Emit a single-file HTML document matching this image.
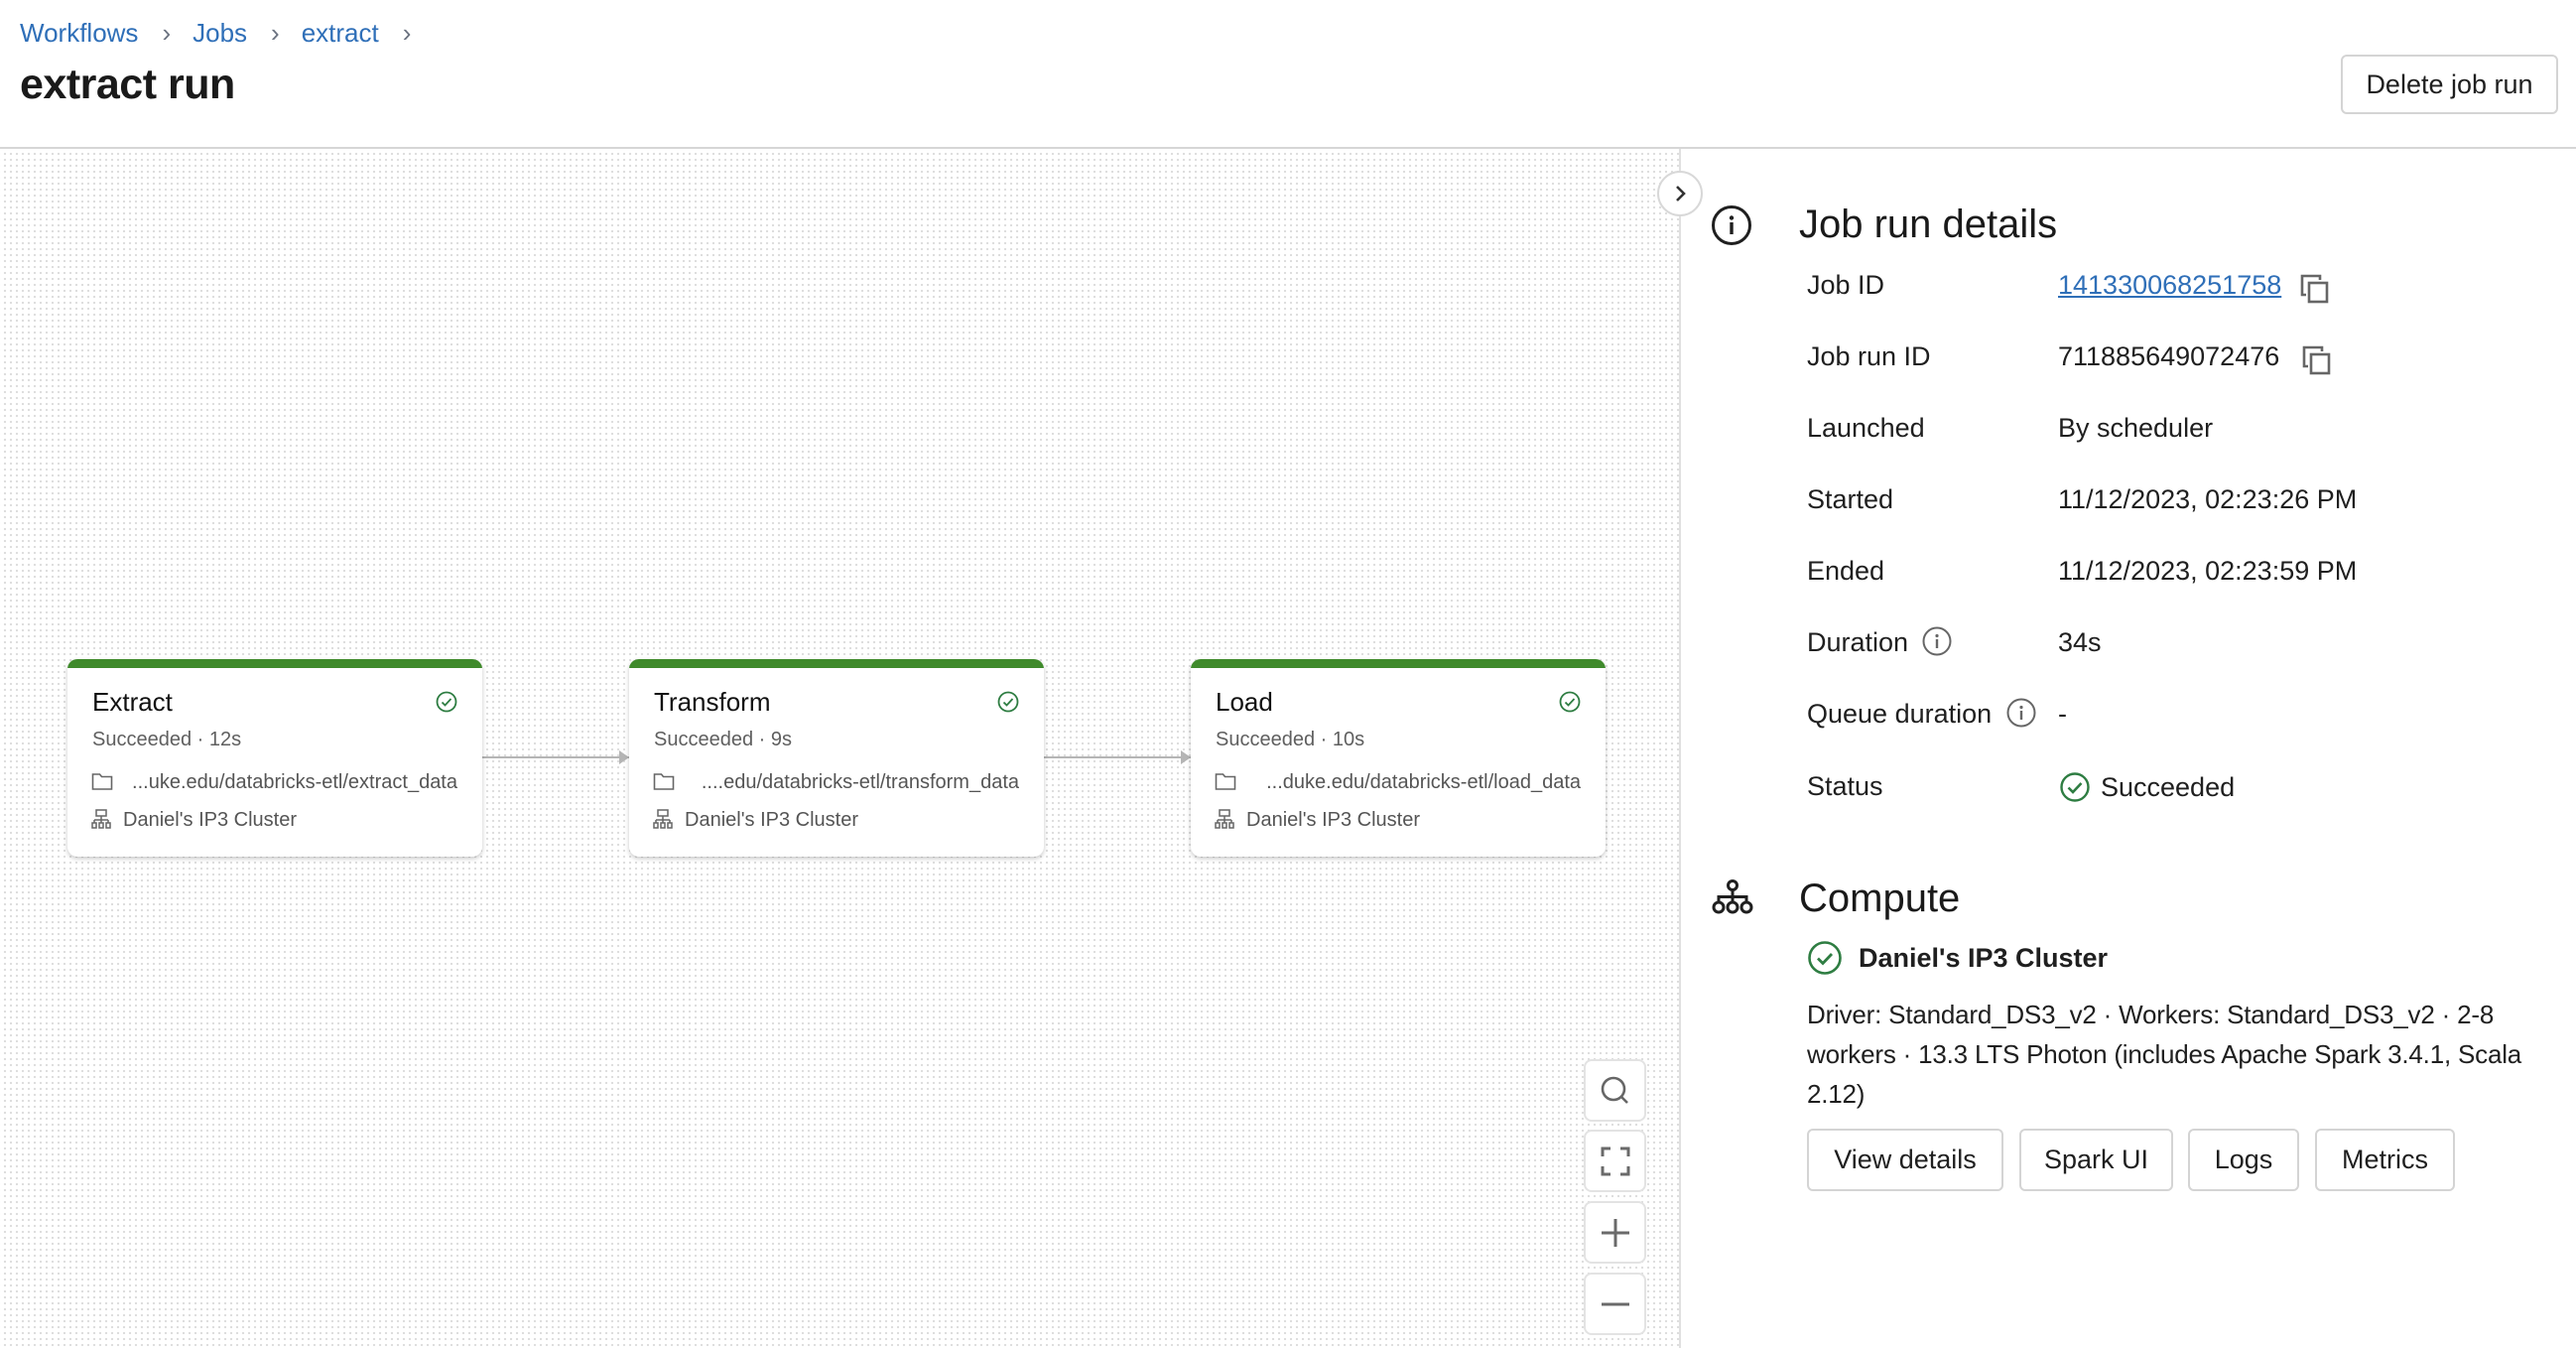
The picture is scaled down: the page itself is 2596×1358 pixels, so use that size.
<!DOCTYPE html>
<html><head><meta charset="utf-8">
<style>
*{box-sizing:border-box;margin:0;padding:0}
body{width:2596px;height:1358px;overflow:hidden;background:#fff;font-family:"Liberation Sans",Arial,sans-serif;color:#1f1f1f;position:relative}
.abs{position:absolute}
.bc{left:20px;top:18px;font-size:26px;color:#2f6fb8}
.bc span.sep{color:#6b7280;margin:0 22px 0 24px;font-size:26px}
.title{left:20px;top:61px;font-size:43px;font-weight:bold;color:#1a1a1a;letter-spacing:-0.5px}
.btn{position:absolute;border:2px solid #d4d4d4;border-radius:6px;background:#fff;font-size:27px;color:#1f1f1f;display:flex;align-items:center;justify-content:center}
.canvas{left:0;top:150px;width:1692px;height:1208px;background-color:#fff;background-image:radial-gradient(circle,#dcdcdc 1px,transparent 1.3px);background-size:6px 6px;background-position:2px 2px}
.hline{left:0;top:148px;width:2596px;height:2px;background:#d6d6d6}
.vline{left:1692px;top:150px;width:2px;height:1208px;background:#e0e0e0}
.card{position:absolute;top:664px;width:418px;height:199px;background:#fff;border-radius:10px;box-shadow:0 2px 5px rgba(0,0,0,.22);overflow:hidden}
.card .bar{position:absolute;left:0;top:0;right:0;height:9px;background:#3f8a2b}
.card .t{position:absolute;left:25px;top:28px;font-size:26px;color:#111}
.card .s{position:absolute;left:25px;top:70px;font-size:20px;color:#5f5f5f}
.card .p{position:absolute;right:25px;top:113px;font-size:20px;color:#555;white-space:nowrap}
.card .c{position:absolute;left:56px;top:151px;font-size:20px;color:#555}
.card .fi{position:absolute;left:24px;top:113px}
.card .ci{position:absolute;left:24px;top:151px}
.card .ok{position:absolute;right:25px;top:32px}
.edge{position:absolute;top:762px;height:2px;background:#b5b5b5}
.lbl{position:absolute;left:1821px;font-size:27px;color:#1f1f1f}
.val{position:absolute;left:2074px;font-size:27px;color:#1f1f1f}
.ctl{position:absolute;left:1596px;width:63px;height:63px;border:2px solid #e3e3e3;border-radius:8px;background:#fff;display:flex;align-items:center;justify-content:center}
</style></head><body>
<div class="abs bc">Workflows<span class="sep">›</span>Jobs<span class="sep">›</span>extract<span class="sep">›</span></div>
<div class="abs title">extract run</div>
<div class="btn" style="left:2359px;top:55px;width:219px;height:60px">Delete job run</div>
<div class="abs canvas"></div>
<div class="abs hline"></div>
<div class="abs vline"></div>

<div class="edge" style="left:486px;width:148px"></div>
<div class="edge" style="left:1052px;width:148px"></div>
<svg class="abs" style="left:624px;top:756px" width="12" height="14"><path d="M0 0 L10 7 L0 14Z" fill="#b5b5b5"/></svg>
<svg class="abs" style="left:1190px;top:756px" width="12" height="14"><path d="M0 0 L10 7 L0 14Z" fill="#b5b5b5"/></svg>

<div class="card" style="left:68px"><div class="bar"></div><div class="t">Extract</div><div class="s">Succeeded · 12s</div>
<svg class="fi" width="22" height="20" viewBox="0 0 22 20"><path d="M1.5 3h7l2 2.5h10v12.5h-19z" fill="none" stroke="#666" stroke-width="1.6"/></svg>
<div class="p">...uke.edu/databricks-etl/extract_data</div>
<svg class="ci" width="20" height="20" viewBox="0 0 20 20" fill="none" stroke="#666" stroke-width="1.5"><rect x="5" y="1" width="10" height="6"/><path d="M10 7v4M3 11h14M3 11v3M10 11v3M17 11v3"/><rect x="1" y="14" width="4" height="5"/><rect x="8" y="14" width="4" height="5"/><rect x="15" y="14" width="4" height="5"/></svg>
<div class="c">Daniel's IP3 Cluster</div>
<svg class="ok" width="22" height="22" viewBox="0 0 22 22"><circle cx="11" cy="11" r="9.5" fill="none" stroke="#2e7d42" stroke-width="1.8"/><path d="M6.5 11.5l3 3 6-6.5" fill="none" stroke="#2e7d42" stroke-width="1.8"/></svg></div>

<div class="card" style="left:634px"><div class="bar"></div><div class="t">Transform</div><div class="s">Succeeded · 9s</div>
<svg class="fi" width="22" height="20" viewBox="0 0 22 20"><path d="M1.5 3h7l2 2.5h10v12.5h-19z" fill="none" stroke="#666" stroke-width="1.6"/></svg>
<div class="p">....edu/databricks-etl/transform_data</div>
<svg class="ci" width="20" height="20" viewBox="0 0 20 20" fill="none" stroke="#666" stroke-width="1.5"><rect x="5" y="1" width="10" height="6"/><path d="M10 7v4M3 11h14M3 11v3M10 11v3M17 11v3"/><rect x="1" y="14" width="4" height="5"/><rect x="8" y="14" width="4" height="5"/><rect x="15" y="14" width="4" height="5"/></svg>
<div class="c">Daniel's IP3 Cluster</div>
<svg class="ok" width="22" height="22" viewBox="0 0 22 22"><circle cx="11" cy="11" r="9.5" fill="none" stroke="#2e7d42" stroke-width="1.8"/><path d="M6.5 11.5l3 3 6-6.5" fill="none" stroke="#2e7d42" stroke-width="1.8"/></svg></div>

<div class="card" style="left:1200px"><div class="bar"></div><div class="t">Load</div><div class="s">Succeeded · 10s</div>
<svg class="fi" width="22" height="20" viewBox="0 0 22 20"><path d="M1.5 3h7l2 2.5h10v12.5h-19z" fill="none" stroke="#666" stroke-width="1.6"/></svg>
<div class="p">...duke.edu/databricks-etl/load_data</div>
<svg class="ci" width="20" height="20" viewBox="0 0 20 20" fill="none" stroke="#666" stroke-width="1.5"><rect x="5" y="1" width="10" height="6"/><path d="M10 7v4M3 11h14M3 11v3M10 11v3M17 11v3"/><rect x="1" y="14" width="4" height="5"/><rect x="8" y="14" width="4" height="5"/><rect x="15" y="14" width="4" height="5"/></svg>
<div class="c">Daniel's IP3 Cluster</div>
<svg class="ok" width="22" height="22" viewBox="0 0 22 22"><circle cx="11" cy="11" r="9.5" fill="none" stroke="#2e7d42" stroke-width="1.8"/><path d="M6.5 11.5l3 3 6-6.5" fill="none" stroke="#2e7d42" stroke-width="1.8"/></svg></div>

<div class="ctl" style="top:1067px"><svg width="34" height="34" viewBox="0 0 34 34"><circle cx="15" cy="15" r="11" fill="none" stroke="#666" stroke-width="2.6"/><path d="M23 23l6 6" stroke="#666" stroke-width="2.6"/></svg></div>
<div class="ctl" style="top:1138px"><svg width="30" height="30" viewBox="0 0 30 30" fill="none" stroke="#6a6a6a" stroke-width="3"><path d="M2 10V2h8M20 2h8v8M28 20v8h-8M10 28H2v-8"/></svg></div>
<div class="ctl" style="top:1210px"><svg width="30" height="30" viewBox="0 0 30 30" stroke="#6a6a6a" stroke-width="3"><path d="M1 15h28M15 1v28"/></svg></div>
<div class="ctl" style="top:1282px"><svg width="30" height="30" viewBox="0 0 30 30" stroke="#6a6a6a" stroke-width="3"><path d="M1 15h28"/></svg></div>

<div class="abs" style="left:1670px;top:172px;width:46px;height:46px;border:2px solid #d8d8d8;border-radius:50%;background:#fff;display:flex;align-items:center;justify-content:center"><svg width="16" height="20" viewBox="0 0 16 20"><path d="M5 3l7 7-7 7" fill="none" stroke="#333" stroke-width="2.6"/></svg></div>

<svg class="abs" style="left:1724px;top:206px" width="42" height="42" viewBox="0 0 42 42"><circle cx="21" cy="21" r="18.5" fill="none" stroke="#1f1f1f" stroke-width="3"/><circle cx="21" cy="13.5" r="2.2" fill="#1f1f1f"/><rect x="19.3" y="18" width="3.4" height="12" fill="#1f1f1f"/></svg>
<div class="abs" style="left:1813px;top:204px;font-size:40px;color:#1a1a1a">Job run details</div>

<div class="lbl" style="top:272px">Job ID</div>
<div class="val" style="top:272px;color:#2f6fb8;text-decoration:underline">141330068251758</div>
<svg class="abs" style="left:2318px;top:276px" width="30" height="30" viewBox="0 0 30 30" fill="none" stroke="#666" stroke-width="2.6"><path d="M20 6V2H2v19h4"/><rect x="9" y="9" width="18" height="19"/></svg>
<div class="lbl" style="top:344px">Job run ID</div>
<div class="val" style="top:344px">711885649072476</div>
<svg class="abs" style="left:2320px;top:348px" width="30" height="30" viewBox="0 0 30 30" fill="none" stroke="#666" stroke-width="2.6"><path d="M20 6V2H2v19h4"/><rect x="9" y="9" width="18" height="19"/></svg>
<div class="lbl" style="top:416px">Launched</div><div class="val" style="top:416px">By scheduler</div>
<div class="lbl" style="top:488px">Started</div><div class="val" style="top:488px">11/12/2023, 02:23:26 PM</div>
<div class="lbl" style="top:560px">Ended</div><div class="val" style="top:560px">11/12/2023, 02:23:59 PM</div>
<div class="lbl" style="top:632px">Duration</div><div class="val" style="top:632px">34s</div>
<svg class="abs" style="left:1936px;top:630px" width="32" height="32" viewBox="0 0 32 32"><circle cx="16" cy="16" r="13.5" fill="none" stroke="#666" stroke-width="2"/><circle cx="16" cy="10.5" r="1.6" fill="#666"/><rect x="14.8" y="14" width="2.4" height="9" fill="#666"/></svg>
<div class="lbl" style="top:704px">Queue duration</div><div class="val" style="top:704px">-</div>
<svg class="abs" style="left:2021px;top:702px" width="32" height="32" viewBox="0 0 32 32"><circle cx="16" cy="16" r="13.5" fill="none" stroke="#666" stroke-width="2"/><circle cx="16" cy="10.5" r="1.6" fill="#666"/><rect x="14.8" y="14" width="2.4" height="9" fill="#666"/></svg>
<div class="lbl" style="top:777px">Status</div>
<svg class="abs" style="left:2075px;top:777px" width="32" height="32" viewBox="0 0 32 32"><circle cx="16" cy="16" r="13.5" fill="none" stroke="#2e7d42" stroke-width="2.4"/><path d="M9.5 16.5l4.5 4.5 8.5-9" fill="none" stroke="#2e7d42" stroke-width="2.6"/></svg>
<div class="val" style="top:778px;left:2117px">Succeeded</div>

<svg class="abs" style="left:1725px;top:886px" width="42" height="36" viewBox="0 0 42 36" fill="none" stroke="#1f1f1f" stroke-width="3"><circle cx="21" cy="6" r="4.5"/><path d="M21 10.5v7M7 23v-5.5h28V23M21 17.5V23"/><circle cx="7" cy="28" r="5"/><circle cx="21" cy="28" r="5"/><circle cx="35" cy="28" r="5"/></svg>
<div class="abs" style="left:1813px;top:883px;font-size:40px;color:#1a1a1a">Compute</div>
<svg class="abs" style="left:1821px;top:947px" width="36" height="36" viewBox="0 0 36 36"><circle cx="18" cy="18" r="15.5" fill="none" stroke="#2e7d42" stroke-width="2.6"/><path d="M11 18.5l5 5 9-9.5" fill="none" stroke="#2e7d42" stroke-width="2.8"/></svg>
<div class="abs" style="left:1873px;top:950px;font-size:27px;font-weight:bold;color:#1f1f1f">Daniel's IP3 Cluster</div>
<div class="abs" style="left:1821px;top:1002px;width:775px;font-size:26px;line-height:40px;color:#1f1f1f;letter-spacing:-0.2px">Driver: Standard_DS3_v2 · Workers: Standard_DS3_v2 · 2-8 workers · 13.3 LTS Photon (includes Apache Spark 3.4.1, Scala 2.12)</div>

<div class="btn" style="left:1821px;top:1137px;width:198px;height:63px">View details</div>
<div class="btn" style="left:2035px;top:1137px;width:155px;height:63px">Spark UI</div>
<div class="btn" style="left:2205px;top:1137px;width:112px;height:63px">Logs</div>
<div class="btn" style="left:2333px;top:1137px;width:141px;height:63px">Metrics</div>
</body></html>
